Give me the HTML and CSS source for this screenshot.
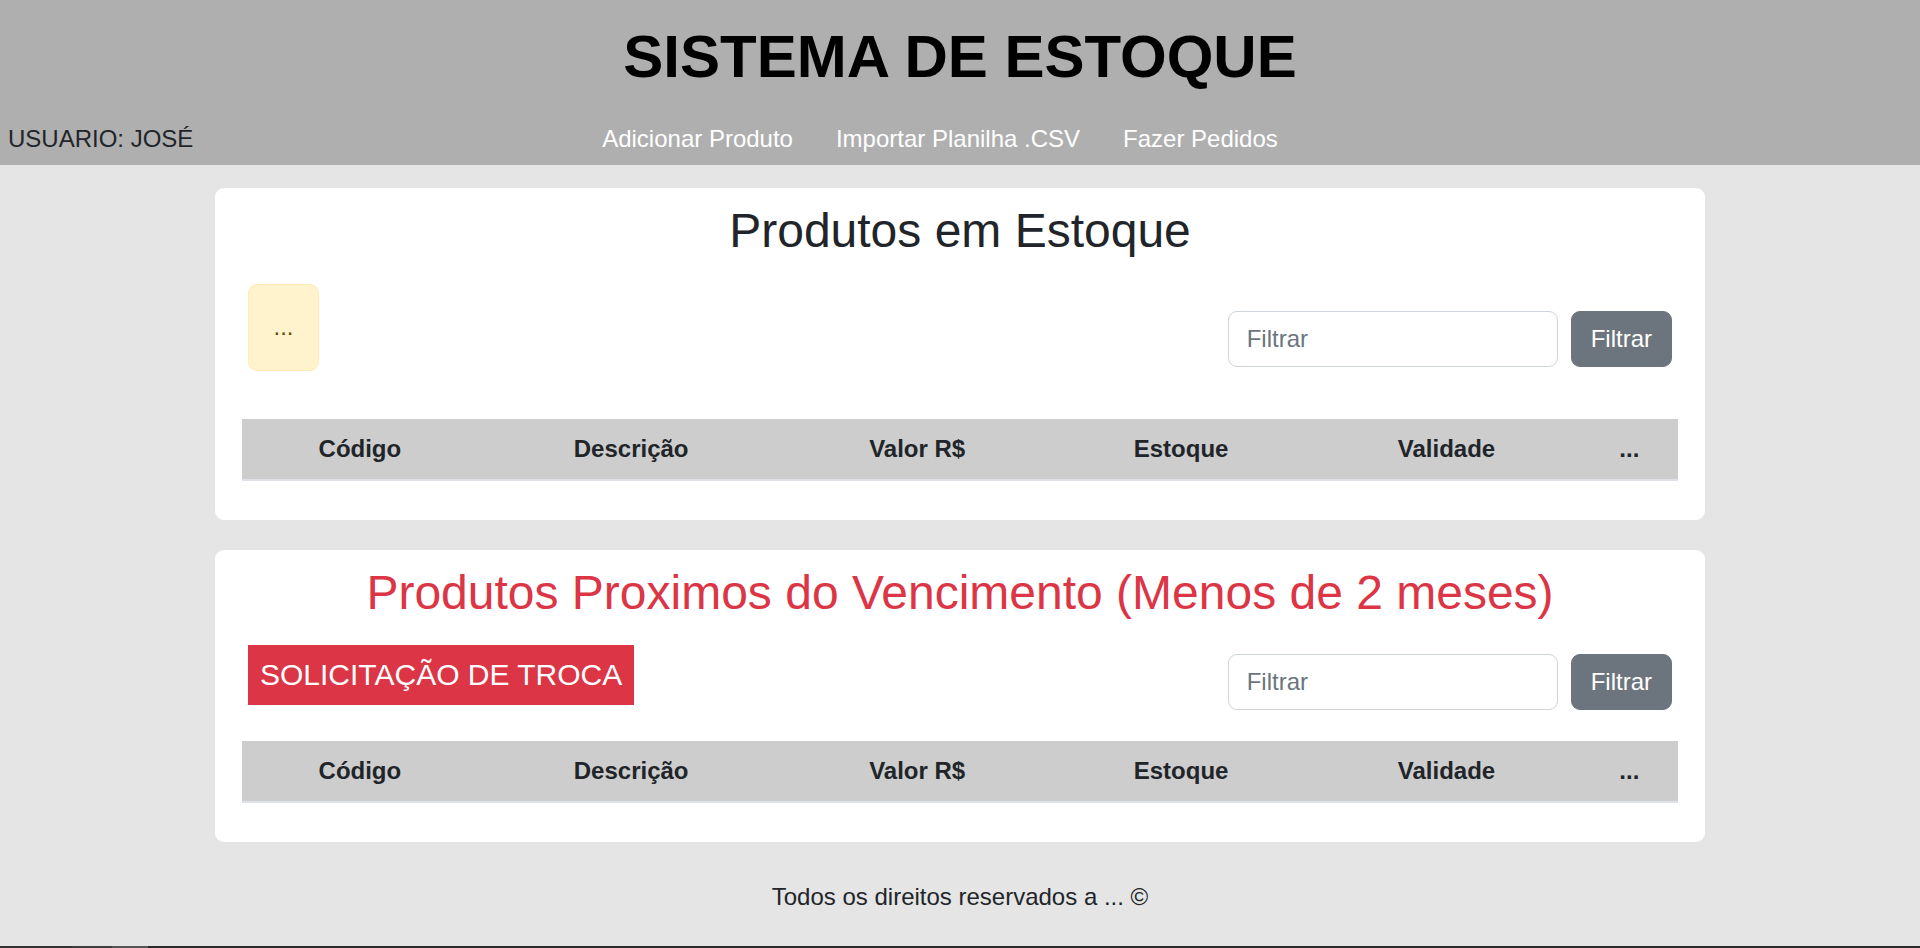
FILE: index.html
```html
<!DOCTYPE html>
<html lang="pt-BR">
<head>
<meta charset="utf-8">
<title>Sistema de Estoque</title>
<link rel="stylesheet" href="styles.css">
</head>
<body>
<header class="site-header">
  <h1 class="site-title">SISTEMA DE ESTOQUE</h1>
  <nav class="nav-row">
    <span class="user">USUARIO: JOSÉ</span>
    <div class="nav-links">
      <a href="#" class="nav-link">Adicionar Produto</a>
      <a href="#" class="nav-link">Importar Planilha .CSV</a>
      <a href="#" class="nav-link">Fazer Pedidos</a>
    </div>
    <span></span>
  </nav>
</header>

<main class="main">
  <section class="card">
    <h2 class="card-title">Produtos em Estoque</h2>
    <div class="toolbar">
      <div class="alert-box">...</div>
      <form class="filter filter--stock">
        <input class="filter-input" type="text" placeholder="Filtrar">
        <button class="filter-btn" type="button">Filtrar</button>
      </form>
    </div>
    <table class="data-table data-table--stock">
      <thead>
        <tr>
          <th>Código</th>
          <th>Descrição</th>
          <th>Valor R$</th>
          <th>Estoque</th>
          <th>Validade</th>
          <th>...</th>
        </tr>
      </thead>
    </table>
  </section>

  <section class="card card--second">
    <h2 class="card-title card-title--danger">Produtos Proximos do Vencimento (Menos de 2 meses)</h2>
    <div class="toolbar">
      <button class="danger-btn" type="button">SOLICITAÇÃO DE TROCA</button>
      <form class="filter filter--expiring">
        <input class="filter-input" type="text" placeholder="Filtrar">
        <button class="filter-btn" type="button">Filtrar</button>
      </form>
    </div>
    <table class="data-table data-table--expiring">
      <thead>
        <tr>
          <th>Código</th>
          <th>Descrição</th>
          <th>Valor R$</th>
          <th>Estoque</th>
          <th>Validade</th>
          <th>...</th>
        </tr>
      </thead>
    </table>
  </section>
</main>

<footer class="site-footer">Todos os direitos reservados a ... ©</footer>
<div class="bottom-bar"></div>
</body>
</html>
```

FILE: styles.css
```css
* { box-sizing: border-box; }

html, body { margin: 0; padding: 0; }

body {
  min-height: 100vh;
  display: flex;
  flex-direction: column;
  background: #e5e5e5;
  color: #212529;
  font-family: "Liberation Sans", Arial, sans-serif;
  font-size: 24px;
  line-height: 1.5;
}

/* Header */
.site-header {
  background: #afafaf;
  padding: 21px 8px 8px;
}

.site-title {
  margin: 0;
  text-align: center;
  font-size: 60px;
  line-height: 72px;
  font-weight: bold;
  color: #000;
}

.nav-row {
  margin-top: 28px;
  display: grid;
  grid-template-columns: 1fr auto 1fr;
  align-items: center;
  line-height: 36px;
}

.user { color: #212529; }

.nav-links {
  display: flex;
  padding-left: 3px;
}

.nav-link {
  color: #fff;
  text-decoration: none;
  margin-right: 43px;
}

/* Main */
.main {
  width: 1490px;
  margin: 23px auto 0;
}

.card {
  background: #fff;
  border-radius: 9px;
  padding: 14px 27px 39px;
}

.card--second { margin-top: 30px; }

.card-title {
  margin: 0 0 24px;
  text-align: center;
  font-size: 48px;
  line-height: 1.2;
  font-weight: normal;
  color: #212529;
}

.card-title--danger { color: #dc3545; }

.toolbar {
  display: flex;
  justify-content: space-between;
  align-items: flex-start;
  padding: 0 6px;
}

.alert-box {
  width: 71px;
  height: 87px;
  display: flex;
  align-items: center;
  justify-content: center;
  background: #fff3cd;
  border: 1px solid #ffecb5;
  border-radius: 9px;
  color: #664d03;
}

.danger-btn {
  background: #dc3545;
  color: #fff;
  border: 0;
  border-radius: 0;
  padding: 12px 12px;
  font-family: inherit;
  font-size: 30px;
  line-height: 36px;
}

.filter {
  display: flex;
  gap: 13px;
  margin: 0;
}

.filter--stock { margin-top: 27px; }
.filter--expiring { margin-top: 9px; }

.filter-input {
  width: 330px;
  height: 56px;
  padding: 9px 18px;
  border: 1px solid #ced4da;
  border-radius: 9px;
  font-family: inherit;
  font-size: 24px;
  line-height: 36px;
  color: #212529;
  background: #fff;
}

.filter-input::placeholder { color: #6c757d; }

.filter-btn {
  height: 56px;
  padding: 9px 19px;
  border: 1px solid #6c757d;
  border-radius: 9px;
  background: #6c757d;
  color: #fff;
  font-family: inherit;
  font-size: 24px;
  line-height: 36px;
}

.data-table {
  width: 100%;
  border-collapse: collapse;
  color: #212529;
}

.data-table--stock { margin-top: 48px; }
.data-table--expiring { margin-top: 31px; }

.data-table th {
  background: #cdcdcd;
  padding: 12px;
  font-weight: bold;
  text-align: center;
  line-height: 36px;
  border-bottom: 2px solid #dee2e6;
}

/* Footer */
.site-footer {
  flex: 1;
  text-align: center;
  padding-top: 37px;
  line-height: 36px;
  color: #212529;
}

.bottom-bar {
  height: 2px;
  background: linear-gradient(to right, #333 0, #333 72px, #3d3d3d 72px, #3d3d3d 112px, #555 112px, #555 148px, #2b2b2b 148px);
}
```
